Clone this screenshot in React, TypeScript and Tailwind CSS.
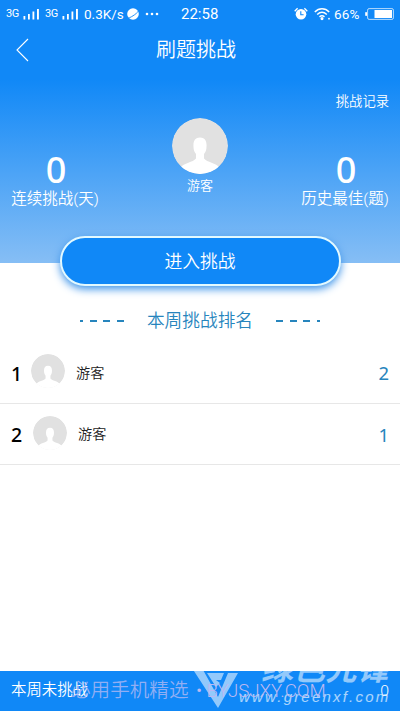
import { clsx } from "clsx";

const ranking = [
  { rank: 1, name: "游客", score: 2 },
  { rank: 2, name: "游客", score: 1 },
];

function Signal() {
  return (
    <svg width="17" height="12" viewBox="0 0 17 12" fill="currentColor">
      <rect x="0.5" y="8" width="1.8" height="3.5" />
      <rect x="5" y="6" width="1.8" height="5.5" />
      <rect x="9.5" y="3.5" width="1.8" height="8" />
      <rect x="14" y="1" width="1.9" height="10.5" />
    </svg>
  );
}

function StatusBar() {
  return (
    <div className="relative flex h-7 items-center justify-between px-1.5 text-white">
      <div className="flex items-center">
        <span className="w-[17px] text-[11px] tracking-[-0.4px]">3G</span>
        <Signal />
        <span className="ml-[5px] w-[17px] text-[11px] tracking-[-0.4px]">3G</span>
        <Signal />
        <span className="ml-[5px] w-[42px] text-[13.500px]">0.3K/s</span>
        <svg width="14" height="14" viewBox="0 0 14 14">
          <circle cx="7" cy="7" r="5.8" fill="currentColor" />
          <path d="M1 11.5C4 11 10 7.5 13 3.5" stroke="#1088f7" strokeWidth="0.9" fill="none" />
        </svg>
        <svg className="ml-1" width="16" height="4" viewBox="0 0 16 4" fill="currentColor">
          <circle cx="3" cy="2" r="1.3" />
          <circle cx="8" cy="2" r="1.3" />
          <circle cx="13" cy="2" r="1.3" />
        </svg>
      </div>
      <span className="absolute left-[181px] text-[15px]">22:58</span>
      <div className="flex items-center">
        <svg width="14" height="14" viewBox="0 0 14 14" fill="none">
          <circle cx="7" cy="7.3" r="5.3" fill="currentColor" />
          <path d="M0.7 4.200L3.600 1.200M10.400 1.200l2.900 3" stroke="currentColor" strokeWidth="1.3" />
          <path d="M6.800 4.200v3.600h2.800" stroke="#1088f7" strokeWidth="1.1" />
        </svg>
        <svg className="ml-1.5" width="17" height="14" viewBox="0 0 17 14" fill="none" stroke="currentColor" strokeWidth="1.5">
          <path d="M0.8 5C5 0.8 11 0.8 15.2 5M3.2 7.5c3-2.700 6.600-2.700 9.600 0M5.500 9.800c1.600-1.300 3.400-1.300 5 0" />
          <circle cx="8" cy="11.6" r="0.8" fill="currentColor" />
          <circle cx="15" cy="11.7" r="0.9" fill="currentColor" stroke="none" />
        </svg>
        <span className="ml-[3px] w-[31px] text-[13.500px] tracking-[0.2px]">66%</span>
        <svg width="29" height="12" viewBox="0 0 29 12">
          <rect x="2.6" y="0.6" width="25.8" height="10.8" rx="1.5" fill="none" stroke="currentColor" strokeOpacity="0.7" />
          <rect x="0.2" y="4" width="1.8" height="4" rx="0.8" fill="currentColor" />
          <rect x="9.500" y="2" width="17.500" height="8" fill="currentColor" />
        </svg>
      </div>
    </div>
  );
}

function Avatar({ className }: { className: string }) {
  return (
    <svg className={clsx("shrink-0 rounded-full", className)} viewBox="0 0 56 56">
      <circle cx="28" cy="28" r="28" fill="#e1e1e1" />
      <path
        d="M28 19.500c5 0 7 3.500 6.500 9.500 0 3-1 5-2.500 7v4.500c3 4 12 4 16 9.500v7H8v-7c4-5.500 13-5.500 16-9.500V36c-1.500-2-2.500-4-2.500-7C21 23 23 19.500 28 19.500Z"
        fill="white"
      />
    </svg>
  );
}

function Stat({ value, label }: { value: number; label: string }) {
  return (
    <div className="flex w-[90px] flex-col items-center">
      <span className="-mt-px mb-px pl-0.5 font-['Noto_Sans'] text-[36px] font-medium leading-9">{value}</span>
      <span className="whitespace-nowrap text-[15.500px] font-[350] leading-5">{label}</span>
    </div>
  );
}

function Dashes({ flip }: { flip?: boolean }) {
  return (
    <svg className={clsx("mb-px", flip && "-scale-x-100")} width="44" height="2" viewBox="0 0 44 2" fill="#2785bd">
      <rect x="0" width="3" height="2" />
      <rect x="10" width="7" height="2" />
      <rect x="23" width="7" height="2" />
      <rect x="37" width="7" height="2" />
    </svg>
  );
}

// Translucent white, so it only shows where it crosses the footer
function Watermark() {
  return (
    <div className="pointer-events-none absolute inset-x-0 bottom-0 h-[60px] overflow-hidden">
      <svg className="absolute left-[190px] top-[14px]" width="50" height="46" viewBox="0 0 50 46" fill="white" fillOpacity="0.55">
        <path d="M2 3h10l16 29L38 8h10L28 43Z" />
        <path d="M17 8h17l-3 7h-5l4 3-4 4Z" />
      </svg>
      <span className="absolute left-[261px] top-[2px] whitespace-nowrap text-[32px] font-bold italic leading-8 text-white/55">
        绿色先锋
      </span>
      <span className="absolute left-[239px] top-[36px] whitespace-nowrap font-['Liberation_Sans'] text-[15px] italic leading-5 tracking-[2.200px] text-white/65">
        www.greenxf.com
      </span>
      <span className="absolute left-[71px] top-[28px] whitespace-nowrap text-[19.600px] font-[350] leading-6 text-[#a9b6f3]/85">
        必用手机精选
      </span>
      <span className="absolute left-[196px] top-[28px] whitespace-nowrap text-[18.700px] font-light leading-6 text-[#bcb8f2]">
        • BYJSJXY.COM
      </span>
    </div>
  );
}

export default function App() {
  return (
    <div className="relative flex h-[711px] w-[400px] flex-col overflow-hidden bg-white font-['Roboto','Noto_Sans_CJK_SC',sans-serif]">
      <header className="h-[263px] bg-linear-to-b/srgb from-[#1088f7] from-30% to-[#86bef5] text-white">
        <StatusBar />
        <div className="grid h-11 grid-cols-[1fr_auto_1fr] items-center pl-4 pr-6">
          <svg width="13" height="24" viewBox="0 0 13 24" fill="none" stroke="currentColor" strokeWidth="1.1">
            <path d="M12 1L1 12l11 11" />
          </svg>
          <h1 className="text-[20px] font-[350] leading-6">刷题挑战</h1>
        </div>
        <div className="mt-5 flex justify-end pr-[11px] text-[13.300px] font-[350] leading-5">挑战记录</div>
        <div className="mt-1.5 flex justify-between px-[10px]">
          <div className="pt-[35px]">
            <Stat value={0} label="连续挑战(天)" />
          </div>
          <div className="flex flex-col items-center">
            <Avatar className="size-14" />
            <span className="mt-0.5 text-[13px] font-[350] leading-5">游客</span>
          </div>
          <div className="pt-[35px]">
            <Stat value={0} label="历史最佳(题)" />
          </div>
        </div>
      </header>

      <button className="z-10 mx-auto -mt-[27px] h-[50px] w-[281px] shrink-0 rounded-full border-2 border-[#e2f9ff] bg-[#1088f7] pt-0.5 text-[17.800px] font-[350] leading-6 text-white shadow-[0_3px_9px_#3991e8]">
        进入挑战
      </button>

      <div className="mt-[21px] flex h-7 items-center justify-center gap-[23px] text-[#2785bd]">
        <Dashes />
        <h2 className="text-[17.700px] font-[350] leading-7">本周挑战排名</h2>
        <Dashes flip />
      </div>

      <ul className="mt-[7px]">
        {ranking.map((r) => (
          <li key={r.rank} className="flex h-[61.500px] items-center border-b border-[#e7e7e7] px-[11px]">
            <span className={clsx("pt-0.5 font-['Noto_Sans'] text-[19.500px] font-medium text-black", r.rank === 1 ? "w-5" : "w-[22px]")}>
              {r.rank}
            </span>
            <Avatar className="mb-0.5 size-[34px]" />
            <span className="ml-[11px] pt-0.5 text-[14.200px] font-[350] text-[#222]">{r.name}</span>
            <span className="ml-auto pt-0.5 font-['Noto_Sans'] text-[18.500px] text-[#2785bd]">{r.score}</span>
          </li>
        ))}
      </ul>

      <footer className="mt-auto flex h-10 shrink-0 items-center justify-between bg-[#1088f7] px-[11px] text-[15.400px] font-[350] text-white">
        <span>本周未挑战</span>
        <span className="font-['Noto_Sans']">0</span>
      </footer>
      <Watermark />
    </div>
  );
}
